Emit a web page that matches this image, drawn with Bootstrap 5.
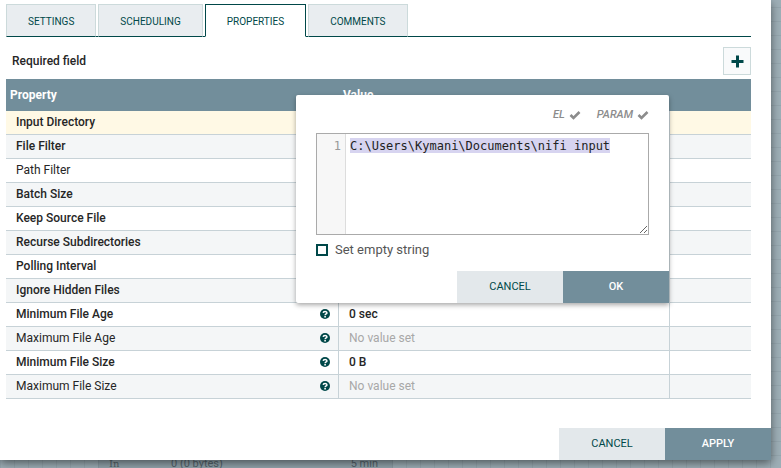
<!DOCTYPE html>
<html lang="en">
<head>
<meta charset="utf-8">
<meta name="viewport" content="width=device-width, initial-scale=1">
<title>Configure Processor</title>
<link href="https://cdn.jsdelivr.net/npm/bootstrap@5.3.0/dist/css/bootstrap.min.css" rel="stylesheet">
<style>
  :root { --teal: #004849; --slate: #728e9b; --line: #c7d2d7; --mist: #e3e8eb; }
  body { font-family: Roboto, "Liberation Sans", sans-serif; font-size: 12px; line-height: 16px; color: #262626; }
  .flow-canvas {
    background-color: #9eafb7;
    background-image: linear-gradient(#95a6ae 1px, transparent 1px), linear-gradient(90deg, #95a6ae 1px, transparent 1px);
    background-size: 14px 14px;
    background-position: 0 7px;
  }
  .processor-node { left: 98px; top: 398px; width: 295px; height: 110px; padding: 57px 14px 0 10px; background: #93a5ad; border: 1px solid #8b9ca4; color: #55656d; font-size: 11px; }
  .node-label { width: 62px; font-family: "DejaVu Serif", serif; font-size: 10px; }
  .config-dialog { margin-right: 10px; background: #fff; box-shadow: 0 3px 9px rgba(0,0,0,.5); }
  .dialog-body { padding: 4px 20px 29px 6px; }

  .config-tabs { gap: 2px; border-bottom: 1px solid var(--teal); }
  .config-tabs .nav-link { height: 33px; padding: 2px 21px 0; margin-bottom: -1px; border: 1px solid #ccdadb; border-bottom-color: var(--teal); border-radius: 0; background: #e9edf0; color: var(--teal); font-size: 10px; }
  .config-tabs .nav-link.active { border-color: var(--teal); border-bottom-color: #fff; background: #fff; color: var(--teal); }
  .toolbar-row { padding: 10px 0 4px 6px; font-weight: 500; }
  .add-btn { width: 28px; height: 28px; border: 1px solid #ccdadb; border-radius: 0; background: #f9fafb; color: var(--teal); }

  .prop-table { table-layout: fixed; border-collapse: separate; border-spacing: 0; width: 100%; }
  .prop-table th { height: 32px; padding: 0 4px; background: var(--slate); color: #fff; font-size: 12px; font-weight: 700; }
  .prop-table td { height: 24px; padding: 0 8px 2px 10px; border-bottom: 1px solid var(--line); border-right: 1px solid var(--line); font-size: 12px; }
  .prop-table td:last-child { border-right: 0; }
  .prop-table tbody tr:nth-child(even) td { background: #f4f6f7; }
  .prop-table tbody tr.current td { background: #fff9e5; }
  .prop-table .required { font-weight: 500; }
  .prop-table .unset { color: #a8a8a8; }
  .col-name { width: 44.7%; }
  .col-value { width: 44.4%; }
  .help-icon { display: block; width: 10px; height: 10px; }

  .action-btn { width: 106px; height: 32px; padding: 0; border: 0; border-radius: 0; font-size: 11px; }
  .action-cancel, .action-cancel:hover { background: var(--mist); color: var(--teal); }
  .action-main, .action-main:hover { background: var(--slate); color: #fff; font-weight: 500; }

  .value-editor { top: 95px; right: 102px; width: 373px; background: #fff; border-radius: 2px 2px 0 2px; box-shadow: 0 2px 5px rgba(0,0,0,.35); }
  .editor-body { padding: 12px 20px 13px; }
  .support-flags { gap: 16px; height: 16px; margin-bottom: 10px; color: #8c8c8c; font-size: 11px; font-style: italic; font-weight: 500; }
  .code-box { height: 102px; border: 1px solid #aaa; }
  .code-gutter { width: 29px; padding: 5px 4px 0; border-right: 1px solid #ddd; background: #f7f7f7; color: #999; text-align: right; }
  .code-gutter, .code-text { font-family: "DejaVu Sans Mono", monospace; font-size: 12px; line-height: 15px; }
  .code-text { padding: 5px 4px; border: 0; outline: 0; color: #222; resize: vertical; background: linear-gradient(#d7d4f0, #d7d4f0) 4px 4px / 36ch 15px no-repeat; }
  .empty-option { gap: 7px; margin-top: 7px; height: 16px; font-size: 13px; color: #555; }
  .square-check { appearance: none; width: 12px; height: 12px; margin: 0; border: 2px solid var(--teal); background: #fff; }
  .square-check:checked { background: var(--teal); }
</style>
<script src="https://cdn.jsdelivr.net/npm/bootstrap@5.3.0/dist/js/bootstrap.bundle.min.js"></script>
</head>
<body>
<svg class="d-none" aria-hidden="true">
  <symbol id="help" viewBox="0 0 10 10"><circle cx="5" cy="5" r="5" fill="#004849"/><path d="M3.200 3.900C3.300 2.100 6.900 2 6.900 3.900C6.900 5 5.100 4.900 5.100 6.300" fill="none" stroke="#fff" stroke-width="1.500"/><path d="M4.300 6.900h1.600v1.500H4.300z" fill="#fff"/></symbol>
  <symbol id="tick" viewBox="0 0 12 10"><path d="M1.500 5L4.500 8L10.500 2" fill="none" stroke="currentColor" stroke-width="2.600"/></symbol>
</svg>
<div class="flow-canvas position-relative vh-100 overflow-hidden">
  <div class="processor-node position-absolute d-flex">
    <span class="node-label">In</span><span>0 (0 bytes)</span><span class="ms-auto">5 min</span>
  </div>

  <main class="config-dialog position-relative">
    <div class="dialog-body">
      <ul class="nav nav-tabs config-tabs" role="tablist">
        <li class="nav-item"><button class="nav-link" type="button" role="tab">SETTINGS</button></li>
        <li class="nav-item"><button class="nav-link" type="button" role="tab">SCHEDULING</button></li>
        <li class="nav-item"><button class="nav-link active" type="button" role="tab" aria-selected="true">PROPERTIES</button></li>
        <li class="nav-item"><button class="nav-link" type="button" role="tab">COMMENTS</button></li>
      </ul>
      <div class="toolbar-row d-flex align-items-center justify-content-between">
        <span>Required field</span>
        <button class="add-btn btn p-0 d-flex align-items-center justify-content-center" type="button" aria-label="Add property">
          <svg width="13" height="13" viewBox="0 0 13 13"><path d="M5 .5h3V5h4.500v3H8v4.500H5V8H.5V5H5z" fill="currentColor"/></svg>
        </button>
      </div>

      <table class="prop-table">
        <colgroup><col class="col-name"><col class="col-value"><col></colgroup>
        <thead><tr><th scope="col">Property</th><th scope="col">Value</th><th></th></tr></thead>
        <tbody>
          <tr class="current"><td class="required">Input Directory</td><td></td><td></td></tr>
          <tr><td class="required">File Filter</td><td></td><td></td></tr>
          <tr><td>Path Filter</td><td></td><td></td></tr>
          <tr><td class="required">Batch Size</td><td></td><td></td></tr>
          <tr><td class="required">Keep Source File</td><td></td><td></td></tr>
          <tr><td class="required">Recurse Subdirectories</td><td></td><td></td></tr>
          <tr><td class="required">Polling Interval</td><td></td><td></td></tr>
          <tr><td class="required">Ignore Hidden Files</td><td></td><td></td></tr>
          <tr><td class="required"><div class="d-flex align-items-center justify-content-between">Minimum File Age<svg class="help-icon"><use href="#help"/></svg></div></td><td class="required">0 sec</td><td></td></tr>
          <tr><td><div class="d-flex align-items-center justify-content-between">Maximum File Age<svg class="help-icon"><use href="#help"/></svg></div></td><td class="unset">No value set</td><td></td></tr>
          <tr><td class="required"><div class="d-flex align-items-center justify-content-between">Minimum File Size<svg class="help-icon"><use href="#help"/></svg></div></td><td class="required">0 B</td><td></td></tr>
          <tr><td><div class="d-flex align-items-center justify-content-between">Maximum File Size<svg class="help-icon"><use href="#help"/></svg></div></td><td class="unset">No value set</td><td></td></tr>
        </tbody>
      </table>
    </div>
    <div class="d-flex justify-content-end">
      <button class="btn action-btn action-cancel" type="button">CANCEL</button>
      <button class="btn action-btn action-main" type="button">APPLY</button>
    </div>

    <section class="value-editor position-absolute" role="dialog" aria-label="Property value">
      <div class="editor-body">
        <div class="support-flags d-flex justify-content-end align-items-center">
          <span class="d-flex align-items-center gap-1">EL <svg width="12" height="10"><use href="#tick"/></svg></span>
          <span class="d-flex align-items-center gap-1">PARAM <svg width="12" height="10"><use href="#tick"/></svg></span>
        </div>
        <div class="code-box d-flex">
          <div class="code-gutter flex-shrink-0">1</div>
          <textarea class="code-text flex-grow-1" aria-label="Value" spellcheck="false">C:\Users\Kymani\Documents\nifi input</textarea>
        </div>
        <div class="empty-option d-flex align-items-center">
          <input class="square-check" type="checkbox" id="emptyString">
          <label for="emptyString">Set empty string</label>
        </div>
      </div>
      <div class="d-flex justify-content-end">
        <button class="btn action-btn action-cancel" type="button">CANCEL</button>
        <button class="btn action-btn action-main" type="button">OK</button>
      </div>
    </section>
  </main>
</div>
</body>
</html>
